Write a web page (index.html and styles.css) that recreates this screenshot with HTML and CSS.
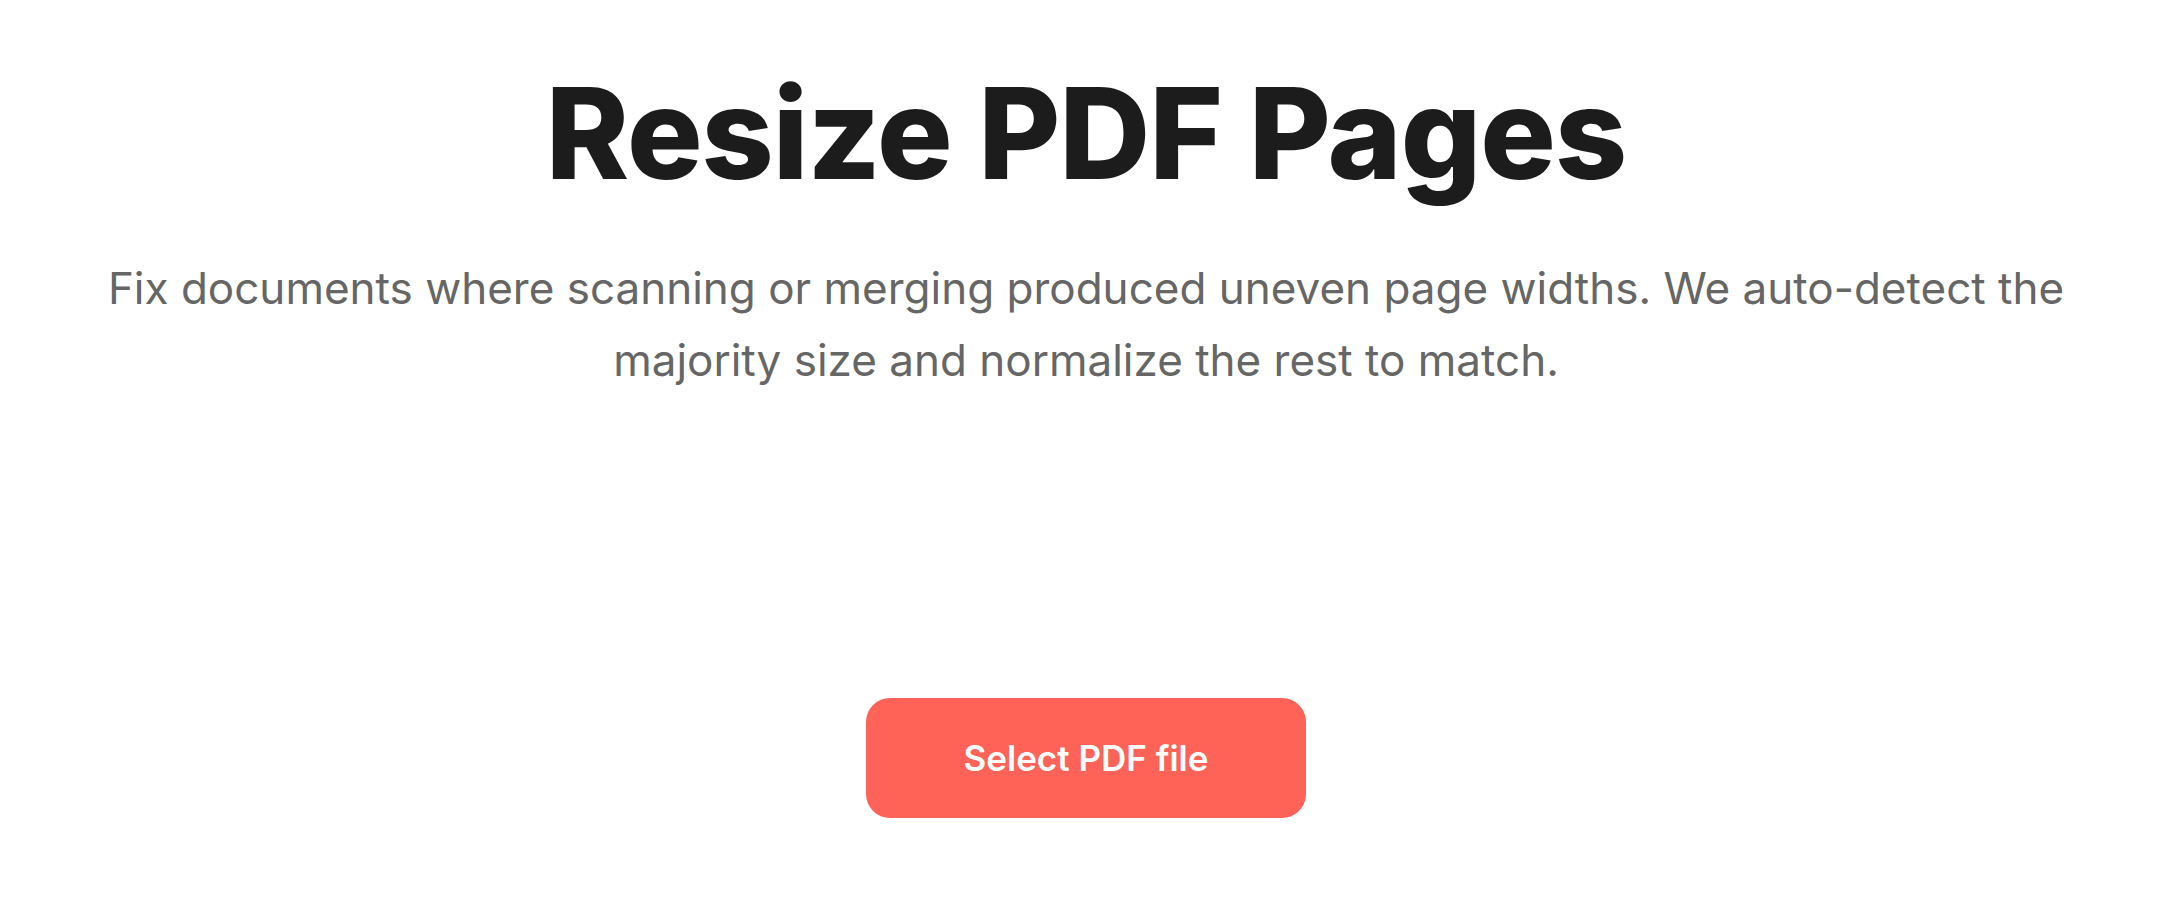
FILE: index.html
```html
<!doctype html>
<html>
<head>
    <meta charset="utf-8">
    <title>Resize PDF Pages</title>
    <link rel="stylesheet" href="styles.css">
</head>

<body>

<div class="tool">
    <h1 class="tool-title">Resize PDF Pages</h1>
    <p class="tool-desc">Fix documents where scanning or merging produced uneven page widths. We auto-detect the majority size and normalize the rest to match.</p>

    <div class="upload">
        <button class="upload-btn" type="button">Select PDF file</button>
    </div>
</div>

</body>
</html>
```

FILE: styles.css
```css
body {
    margin: 0;
    background: #fff;
    font-family: Inter, "Noto Sans", sans-serif;
}

.tool {
    display: flex;
    flex-direction: column;
    align-items: center;
    padding-top: 58px;
}

.tool-title {
    margin: 0;
    font-size: 126px;
    font-weight: 800;
    line-height: 1.2;
    letter-spacing: -1px;
    color: #1c1c1c;
}

.tool-desc {
    margin: 43px 0 0;
    max-width: 2000px;
    font-size: 44px;
    line-height: 72px;
    text-align: center;
    color: #666;
}

.upload {
    margin-top: 302px;
}

.upload-btn {
    width: 440px;
    height: 120px;
    border: none;
    border-radius: 24px;
    background: #ff6257;
    color: #fff;
    font-family: inherit;
    font-size: 35px;
    font-weight: 600;
    cursor: pointer;
}
```
